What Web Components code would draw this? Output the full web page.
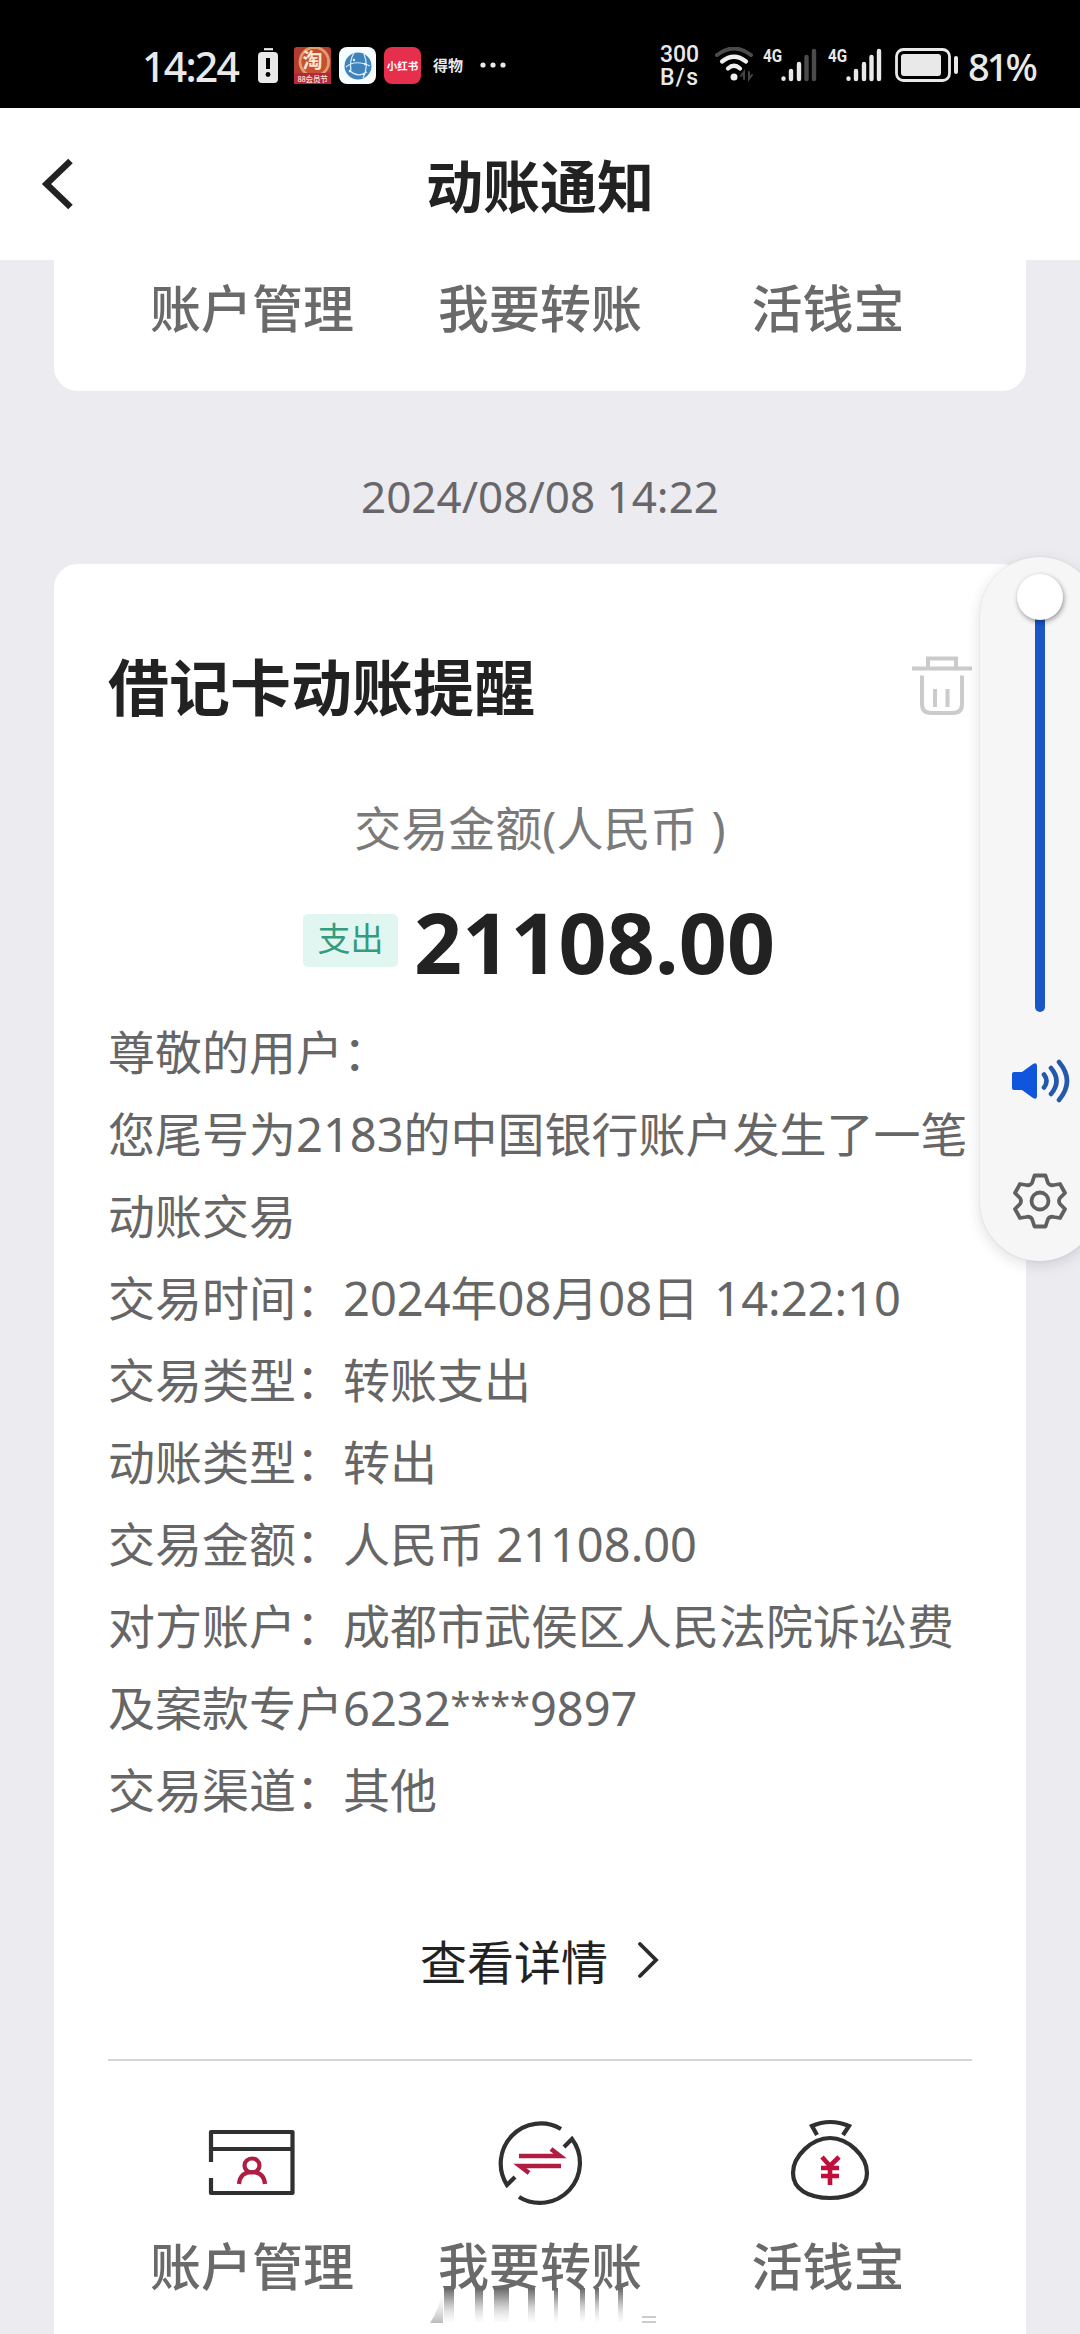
<!DOCTYPE html>
<html lang="zh-CN">
<head>
<meta charset="utf-8">
<title>动账通知</title>
<style>
html,body{margin:0;padding:0;height:2334px;overflow:hidden;background:#ececf0}
body{font-family:"Noto Sans","Noto Sans CJK SC",sans-serif;color:#666}
</style>
</head>
<body>
<notice-app></notice-app>
<script>
const define=(name,html,ready)=>customElements.define(name,class extends HTMLElement{
  connectedCallback(){
    if(this.shadowRoot)return;
    const t=document.createElement('template');
    t.innerHTML=html;
    this.attachShadow({mode:'open'}).append(t.content.cloneNode(true));
    if(ready)ready(this);
  }
});

/* One line of text spread over an exact width by its letter spacing */
define('fit-text',`<style>:host{display:block;white-space:nowrap;flex:none}span{display:inline-block}</style><span><slot></slot></span>`,el=>{
  const w=+el.getAttribute('w'),s=el.shadowRoot.querySelector('span');
  el.style.width=w+'px';
  requestAnimationFrame(()=>{const n=el.textContent.length;s.style.letterSpacing=(w-s.getBoundingClientRect().width)/(n-1)+'px'});
});

define('signal-bars',`<style>:host{display:flex;align-items:flex-start;height:36px;width:54px;flex:none}
span{font:700 19px/15px Roboto,sans-serif;width:18px;transform:scaleX(.8);transform-origin:0 0;white-space:nowrap}
svg{display:block}:host([weak]) .w{stroke:#4b4b4b}</style>
<span>4G</span><svg width="36" height="35" viewBox="0 0 36 35" fill="none" stroke="#e9e9e9" stroke-width="4.400" stroke-linecap="round"><path d="M2.500 30.500v.3M10 23v8M18 16v15"/><path class="w" d="M25.500 9v22M33 3v28"/></svg>`);

define('status-bar',`<style>
:host{display:flex;height:108px;background:#000;color:#e9e9e9;align-items:flex-start;box-sizing:border-box;padding:47px 0 0 142px}
svg{display:block;flex:none}
.time{font-weight:500;font-size:41px;line-height:40px;margin-top:-1px}
.bat{margin:1px 0 0 18px}
.app{width:37px;height:37px;border-radius:8px;flex:none;display:flex;flex-direction:column;align-items:center;justify-content:center}
.tb{margin-left:16px;border-radius:3px;background:radial-gradient(circle at 55% 40%,#c75034 0 42%,#dfa06d 44% 50%,#b33b30 54%);color:#ffe9cf;font:700 20px/26px "Noto Sans CJK SC",sans-serif}
.tb small{font:500 7.500px/11px "Noto Sans CJK SC",sans-serif;background:#b52741;width:100%;text-align:center;white-space:nowrap;letter-spacing:-.2px}
.net{margin-left:8px;background:#f6fcff}
.red{margin-left:8px;background:#e62e4d;color:#fff;font:700 10.500px/14px "Noto Sans CJK SC",sans-serif;white-space:nowrap}
.dw{margin:9px 0 0 12px;font:700 15px/18px "Noto Sans CJK SC",sans-serif}
.dots{margin:15px 0 0 17px}
.speed{margin:-4px 0 0 154px;font:500 23px/23px Roboto,sans-serif}
.wifi{margin:0 0 0 16px}
.s1{margin:1px 0 0 10px}.s2{margin:1px 0 0 11px}
.cell{margin:1px 0 0 13px}
.pct{margin:-1px 0 0 9px;font-weight:500;font-size:38px;line-height:40px}
</style>
<fit-text class="time" w="98">14:24</fit-text>
<svg class="bat" width="20" height="35" viewBox="0 0 20 35"><path d="M6 1.200h9" stroke="#e9e9e9" stroke-width="2.200"/><rect x="0" y="4" width="20" height="31" rx="4" fill="#e9e9e9"/><path d="M10 10v11" stroke="#000" stroke-width="4"/><circle cx="10" cy="26.500" r="2.400"/></svg>
<div class="app tb">淘<small>88会员节</small></div>
<div class="app net"><svg width="30" height="30" viewBox="0 0 30 30"><circle cx="15" cy="15" r="13.500" fill="#3f83bd"/><g fill="none" stroke="#d9edfa" stroke-width="1.200"><path d="M11 2Q6 10 8 19M3 16Q12 8 27 15M7 20q8 7 17 1M21 3q5 12-1 24"/></g><g fill="#e6f5ff"><circle cx="11" cy="9" r="1.200"/><circle cx="22" cy="13" r="1.200"/><circle cx="7" cy="20" r="1.300"/><circle cx="21" cy="23" r="1.300"/></g></svg></div>
<div class="app red">小红书</div>
<fit-text class="dw" w="30">得物</fit-text>
<svg class="dots" width="26" height="6" viewBox="0 0 26 6" fill="#e9e9e9"><circle cx="3" cy="3" r="2.600"/><circle cx="13" cy="3" r="2.600"/><circle cx="23" cy="3" r="2.600"/></svg>
<div class="speed"><fit-text w="39">300</fit-text><fit-text w="38">B/s</fit-text></div>
<svg class="wifi" width="38" height="36" viewBox="0 0 38 36" fill="none" stroke-linecap="round"><path d="M2 8Q19-5 36 8" stroke="#4b4b4b" stroke-width="4"/><path d="M7 14.500q12-9.500 24 0M13 21.500q6-5.500 12 0" stroke="#f0f0f0" stroke-width="4.200"/><circle cx="19" cy="30" r="3.500" fill="#f0f0f0"/><path d="M29 32v-7l-3 4M34 25v7l3-4" stroke="#444" stroke-width="2"/></svg>
<signal-bars class="s1" weak></signal-bars>
<signal-bars class="s2"></signal-bars>
<svg class="cell" width="64" height="34" viewBox="0 0 64 34" fill="none"><rect x="1.500" y="1.500" width="53" height="31" rx="7" stroke="#e9e9e9" stroke-width="2.800"/><rect x="6" y="6" width="40" height="22" rx="3" fill="#e9e9e9"/><path d="M61 10v14" stroke="#e9e9e9" stroke-width="4" stroke-linecap="round"/></svg>
<fit-text class="pct" w="70">81%</fit-text>`);

define('title-bar',`<style>:host{display:grid;grid-template-columns:120px 1fr 120px;height:152px;background:#fff;align-items:center}
svg{display:block;margin-left:40px}h1{margin:4px 0 0;font-size:57px;line-height:80px;font-weight:700;color:#222;text-align:center}</style>
<svg width="34" height="52" viewBox="0 0 34 52" fill="none" stroke="#222" stroke-width="6.500"><path d="M30.500 3 6.500 26l24 23"/></svg><h1><slot></slot></h1>`);

define('menu-label',`<style>:host{display:block;flex:1;text-align:center;font-size:51px;font-weight:500;color:#6a6a6a;white-space:nowrap}</style><slot></slot>`);

define('message-card',`<style>:host{display:block;background:#fff;margin:0 54px;padding:0 54px}</style><slot></slot>`);

define('message-row',`<style>:host{display:block;height:82px;line-height:82px;white-space:pre;font-size:47px;color:#666}</style><slot></slot>`);

define('menu-item',`<style>:host{display:flex;flex:1;flex-direction:column;align-items:center}
.l{font-size:51px;line-height:60px;margin-top:26px;font-weight:500;color:#6a6a6a;white-space:nowrap}</style><slot name="icon"></slot><div class="l"><slot></slot></div>`);

define('volume-panel',`<style>:host{box-sizing:border-box;display:flex;flex-direction:column;align-items:center;width:119px;height:704px;border-radius:60px;background:#f6f6f7;box-shadow:0 4px 14px rgba(40,40,70,.15),0 0 2px rgba(0,0,0,.1);padding-top:17px}
.knob{width:46px;height:46px;border-radius:50%;background:#fff;box-shadow:1px 2px 5px rgba(0,0,0,.4);z-index:1;flex:none}
.track{width:10px;height:393px;background:#1b56c6;border-radius:0 0 5px 5px;margin-top:-1px;flex:none}
svg{display:block;flex:none}.v{margin-top:46px}.g{margin-top:69px}</style>
<div class="knob"></div><div class="track"></div>
<svg class="v" width="60" height="46" viewBox="0 0 60 46" fill="none" stroke-linecap="round"><path d="M4 14h8l11-8q4-2 4 2v30q0 4-4 2l-11-8H4q-2 0-2-2V16q0-2 2-2z" fill="#0f56dc"/><g stroke="#2458ac" stroke-width="4.600"><path d="M34 16.500q5 6.500 0 13M41 10q11 13 0 26M49 4q16 19 0 38"/></g></svg>
<svg class="g" width="56" height="56" viewBox="-28 -28 56 56" fill="none" stroke="#606060" stroke-width="3.800" stroke-linejoin="round"><path d="M-5.500-25.500H5.500L8-18Q10-15 14-16L20-17 25-8 20-3Q18 0 20 3L25 8 20 17 14 16Q10 15 8 18L5.500 25.500H-5.500L-8 18Q-10 15-14 16L-20 17-25 8-20 3Q-18 0-20-3L-25-8-20-17-14-16Q-10-15-8-18Z"/><circle r="8.500"/></svg>`);

/* Faded vertical streaks trailing below the middle label */
define('fade-streaks',`<style>:host{display:block;width:228px;height:36px}svg{display:block}</style>
<svg width="228" height="36" viewBox="0 0 228 36"><defs><linearGradient id="a" x2="0" y2="1"><stop stop-color="#666"/><stop offset=".3" stop-color="#888" stop-opacity=".8"/><stop offset="1" stop-color="#ddd" stop-opacity=".1"/></linearGradient><linearGradient id="b" x2="0" y2="1"><stop stop-color="#fff" stop-opacity="0"/><stop offset="1" stop-color="#bbb"/></linearGradient></defs>
<path d="M13 0v35H0Q9 22 13 0z" fill="url(#b)"/><g fill="url(#a)"><path d="M14 0h10v34H14zM45 0h8v34h-8zM64 0h15v34H64zM98 0h7v34h-7zM124 0h4v34h-4zM150 0h5v34h-5zM165 0h4v34h-4zM188 0h5v34h-5z"/></g><path d="M212 29h14M212 34h14" stroke="#ccc" stroke-width="2"/></svg>`);

define('notice-app',`<style>
:host{display:flex;flex-direction:column;width:1080px;height:2334px;position:relative;overflow:hidden;background:#ececf0}
.prev{display:flex;height:131px;box-sizing:border-box;border-radius:0 0 24px 24px;line-height:96px}
.date{margin:65px 0 28px;height:80px;line-height:80px;font-size:44px;text-align:center;color:#67676b}
.main{flex:1;border-radius:24px 24px 0 0;padding-top:84px}
.head{display:flex;justify-content:space-between;align-items:center;height:80px}
.head svg{margin:-4px 0 0}
h2{margin:0;font-size:61px;line-height:80px;font-weight:700;color:#222}
.sub{margin-top:70px;font-size:47px;line-height:60px;text-align:center;color:#7a7a7a;white-space:pre;word-spacing:2px}
.money{margin:44px 0 29px;height:80px;display:flex;align-items:center;padding-left:195px}
.tag{width:95px;height:53px;line-height:50px;border-radius:5px;background:#e1f6f0;color:#359b7f;font-size:33px;text-align:center;margin-top:-3px}
.amt{margin-left:16px;font-size:84px;font-weight:700;line-height:80px;color:#222}
.time{word-spacing:3px}
.star{font-size:36px;line-height:0;vertical-align:8px}
.more{margin-top:101px;height:60px;line-height:60px;display:flex;justify-content:center;align-items:center;font-size:47px;color:#222;gap:28px}
hr{border:0;height:2px;background:#d5d5d5;margin:67px 0 53px}
.menu{display:flex}
svg{display:block}
.menu svg{height:96px;width:96px}
.menu .bag{margin-left:4px}
volume-panel{position:absolute;left:980px;top:557px}
fade-streaks{position:absolute;left:430px;top:2288px}
</style>
<status-bar></status-bar>
<title-bar>动账通知</title-bar>
<message-card class="prev"><menu-label>账户管理</menu-label><menu-label>我要转账</menu-label><menu-label>活钱宝</menu-label></message-card>
<div class="date">2024/08/08 14:22</div>
<message-card class="main">
<div class="head"><h2>借记卡动账提醒</h2><svg width="60" height="60" viewBox="0 0 60 60" fill="none" stroke="#cbcbcb" stroke-width="4"><path d="M0 12.500h60M16 12V2.500h28V12M10 19.500V48q0 9 9 9h22q9 0 9-9V19.500M23 33v18M35.500 33v18"/></svg></div>
<div class="sub">交易金额(人民币 )</div>
<div class="money"><div class="tag">支出</div><fit-text class="amt" w="361">21108.00</fit-text></div>
<message-row>尊敬的用户：</message-row>
<message-row>您尾号为2183的中国银行账户发生了一笔</message-row>
<message-row>动账交易</message-row>
<message-row class="time">交易时间：2024年08月08日 14:22:10</message-row>
<message-row>交易类型：转账支出</message-row>
<message-row>动账类型：转出</message-row>
<message-row>交易金额：人民币 21108.00</message-row>
<message-row>对方账户：成都市武侯区人民法院诉讼费</message-row>
<message-row>及案款专户6232<span class="star">****</span>9897</message-row>
<message-row>交易渠道：其他</message-row>
<div class="more">查看详情<svg width="24" height="40" viewBox="0 0 24 40" fill="none" stroke="#2a2a2a" stroke-width="3.800" stroke-linecap="round"><path d="m4 2 16 16L4 34"/></svg></div>
<hr>
<div class="menu">
<menu-item><svg slot="icon" viewBox="0 0 96 96" fill="none" stroke="#303030" stroke-width="4.200"><path d="M7 48V18h81.500v61H7V64M7 35h81" stroke-linejoin="round"/><g stroke="#b01d43" stroke-width="4.200"><ellipse cx="48" cy="51.500" rx="7.500" ry="7"/><path d="M35 70q1-12 13-12t13 12"/></g></svg>账户管理</menu-item>
<menu-item><svg slot="icon" viewBox="0 0 96 96" fill="none" stroke="#303030" stroke-width="4.200"><path d="M69 15A40 40 0 0 0 15 71l8-8M27 83A40 40 0 0 0 80 25l-8 8"/><path d="M27 42h41L59 35M69 52H28l9 7" stroke="#b01d43" stroke-width="4.600"/></svg>我要转账</menu-item>
<menu-item><svg slot="icon" class="bag" viewBox="0 0 96 96" fill="none" stroke="#303030" stroke-width="4.200"><path d="M48 24C30 24 11 42 11 59 11 75 26 84 48 84s37-9 37-25C85 42 66 24 48 24zM35 21l-5-9q18-8 37 0l-6 9"/><path d="m40 43 8 9 9-9M39 54h18M39 62h18M48 52v19" stroke="#c00f3a" stroke-width="4.600"/></svg>活钱宝</menu-item>
</div>
</message-card>
<volume-panel></volume-panel>
<fade-streaks></fade-streaks>`);
</script>
</body>
</html>
